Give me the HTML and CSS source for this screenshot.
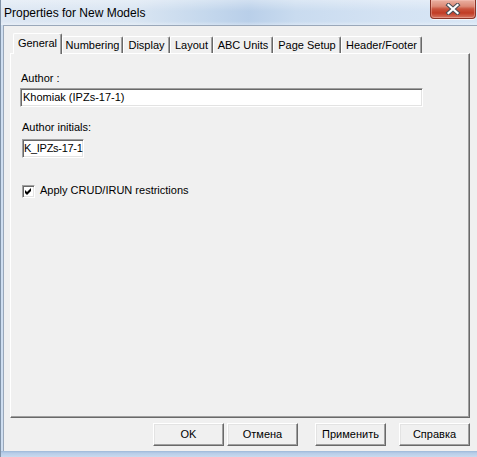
FILE: index.html
```html
<!DOCTYPE html>
<html>
<head>
<meta charset="utf-8">
<title>Properties for New Models</title>
<link rel="stylesheet" href="styles.css">
</head>
<body>
<div class="window">
  <div class="titlebar">
    <span class="title">Properties for New Models</span>
    <div class="close">
      <svg width="16" height="12" viewBox="0 0 16 12">
        <path d="M3.5 2 L12.5 10 M12.5 2 L3.5 10" stroke="#4a4d55" stroke-width="4.2" stroke-linecap="square"/>
        <path d="M3.5 2 L12.5 10 M12.5 2 L3.5 10" stroke="#ffffff" stroke-width="2.2" stroke-linecap="square"/>
      </svg>
    </div>
  </div>
  <div class="main">
    <div class="client">
      <div class="tabs">
        <div class="tab active w-general">General</div>
        <div class="tab w-numbering">Numbering</div>
        <div class="tab w-display">Display</div>
        <div class="tab w-layout">Layout</div>
        <div class="tab w-abc">ABC Units</div>
        <div class="tab w-page">Page Setup</div>
        <div class="tab w-header">Header/Footer</div>
      </div>
      <div class="page">
        <div class="lbl lbl-author">Author :</div>
        <div class="edit edit-author">Khomiak (IPZs-17-1)</div>
        <div class="lbl lbl-initials">Author initials:</div>
        <div class="edit edit-initials">K_IPZs-17-1</div>
        <div class="check-row">
          <span class="checkbox">
            <svg width="9" height="9" viewBox="0 0 9 9">
              <polygon points="1,3 3,5 7,1 7,4 3,8 1,6" fill="#000"/>
            </svg>
          </span>
          <span class="check-label">Apply CRUD/IRUN restrictions</span>
        </div>
      </div>
      <div class="buttons">
        <div class="btn">OK</div>
        <div class="btn gap-s">Отмена</div>
        <div class="btn gap-l">Применить</div>
        <div class="btn gap-m">Справка</div>
      </div>
    </div>
  </div>
  <div class="frame-bottom"></div>
</div>
</body>
</html>
```

FILE: styles.css
```css
html, body {
  margin: 0;
  padding: 0;
}

body {
  width: 477px;
  height: 457px;
  overflow: hidden;
  background: #f0f0f0;
  font-family: "Liberation Sans", Arial, sans-serif;
  font-size: 11px;
  line-height: 13px;
  color: #000;
}

.window {
  height: 457px;
  display: flex;
  flex-direction: column;
  border-left: 1px solid #8193a8;
  background: #cfdef0;
}

.titlebar {
  height: 25px;
  flex: none;
  display: flex;
  align-items: flex-start;
  background:
    linear-gradient(180deg, rgba(255,255,255,0.35) 0%, rgba(255,255,255,0) 45%, rgba(255,255,255,0) 85%, rgba(255,255,255,0.3) 100%),
    linear-gradient(90deg, #dde7f3 0%, #d9e5f2 28%, #c2d6ec 45%, #b9cfe9 52%, #c9dbef 62%, #d3e2f3 80%, #d8e6f5 100%);
}

.title {
  padding: 6px 0 0 3px;
  font-size: 12px;
  line-height: 14px;
  color: #000;
}

.close {
  margin-left: auto;
  margin-right: 1px;
  width: 46px;
  height: 19px;
  box-sizing: border-box;
  border: 1px solid #8a3327;
  border-top: none;
  border-radius: 0 0 4px 4px;
  background: linear-gradient(180deg, #eab0a1 0%, #dc8a77 35%, #c9533d 50%, #c13c25 72%, #cf6550 92%, #d9826e 100%);
  box-shadow: inset 0 0 0 1px rgba(255, 210, 200, 0.35), 0 1px 0 rgba(255,255,255,0.7);
  display: flex;
  align-items: center;
  justify-content: center;
}

.main {
  flex: 1;
  display: flex;
  padding-left: 2px;
  min-height: 0;
}

.client {
  flex: 1;
  display: flex;
  flex-direction: column;
  border-left: 1px solid #9aa8ba;
  border-top: 1px solid #9aa8ba;
  background: #f0f0f0;
}

/* Tabs */
.tabs {
  display: flex;
  align-items: flex-end;
  height: 20px;
  margin-top: 7px;
  padding-left: 9px;
  position: relative;
  z-index: 1;
}

.tab {
  box-sizing: border-box;
  height: 17px;
  padding-top: 2px;
  text-align: center;
  white-space: nowrap;
  border-top: 1px solid #ffffff;
  border-left: 1px solid #ffffff;
  border-right: 1px solid #696969;
  border-radius: 2px 2px 0 0;
  box-shadow: inset -1px 0 0 #a0a0a0;
  background: #f0f0f0;
}

.tab.active {
  height: 21px;
  margin-bottom: -1px;
  padding-top: 3px;
}

.w-general { width: 49px; }
.w-numbering { width: 61px; }
.w-display { width: 47px; }
.w-layout { width: 43px; }
.w-abc { width: 60px; }
.w-page { width: 68px; }
.w-header { width: 81px; }

/* Page */
.page {
  box-sizing: border-box;
  margin-left: 6px;
  width: 460px;
  height: 365px;
  flex: none;
  border-top: 1px solid #ffffff;
  border-left: 1px solid #ffffff;
  border-right: 1px solid #696969;
  border-bottom: 1px solid #696969;
  box-shadow: inset -1px -1px 0 #a0a0a0;
  display: flex;
  flex-direction: column;
  align-items: flex-start;
}

.lbl {
  white-space: nowrap;
}

.lbl-author {
  margin-top: 18px;
  margin-left: 10px;
}

.lbl-initials {
  margin-top: 14px;
  margin-left: 11px;
}

.edit {
  box-sizing: border-box;
  height: 19px;
  padding: 2px 0 0 1px;
  background: #ffffff;
  white-space: nowrap;
  overflow: hidden;
  border-top: 1px solid #a0a0a0;
  border-left: 1px solid #a0a0a0;
  border-right: 1px solid #ffffff;
  border-bottom: 1px solid #ffffff;
  box-shadow: inset 1px 1px 0 #696969, inset -1px -1px 0 #e3e3e3;
}

.edit-author {
  margin-top: 3px;
  margin-left: 9px;
  width: 403px;
  padding-left: 2px;
}

.edit-initials {
  margin-top: 5px;
  margin-left: 11px;
  width: 62px;
  padding-left: 1px;
  letter-spacing: -0.3px;
}

.check-row {
  margin-top: 27px;
  margin-left: 11px;
  display: flex;
  align-items: flex-start;
}

.checkbox {
  box-sizing: border-box;
  width: 13px;
  height: 13px;
  padding: 1px;
  background: #ffffff;
  border-top: 1px solid #a0a0a0;
  border-left: 1px solid #a0a0a0;
  border-right: 1px solid #ffffff;
  border-bottom: 1px solid #ffffff;
  box-shadow: inset 1px 1px 0 #696969, inset -1px -1px 0 #e3e3e3;
  display: flex;
}

.checkbox svg {
  display: block;
}

.check-label {
  margin-left: 5px;
  margin-top: -1px;
  white-space: nowrap;
}

/* Buttons */
.buttons {
  margin-top: 5px;
  display: flex;
  justify-content: flex-end;
  padding-right: 7px;
}

.btn {
  box-sizing: border-box;
  width: 71px;
  height: 23px;
  padding-top: 4px;
  text-align: center;
  white-space: nowrap;
  background: #f0f0f0;
  border-top: 1px solid #ffffff;
  border-left: 1px solid #ffffff;
  border-right: 1px solid #696969;
  border-bottom: 1px solid #696969;
  box-shadow: inset -1px -1px 0 #a0a0a0, inset 1px 1px 0 #e3e3e3;
}

.gap-s { margin-left: 3px; }
.gap-l { margin-left: 17px; }
.gap-m { margin-left: 13px; }

.frame-bottom {
  height: 6px;
  flex: none;
  background: linear-gradient(180deg, #9db8d8 0%, #b7cde8 35%, #c8daee 100%);
}
```
